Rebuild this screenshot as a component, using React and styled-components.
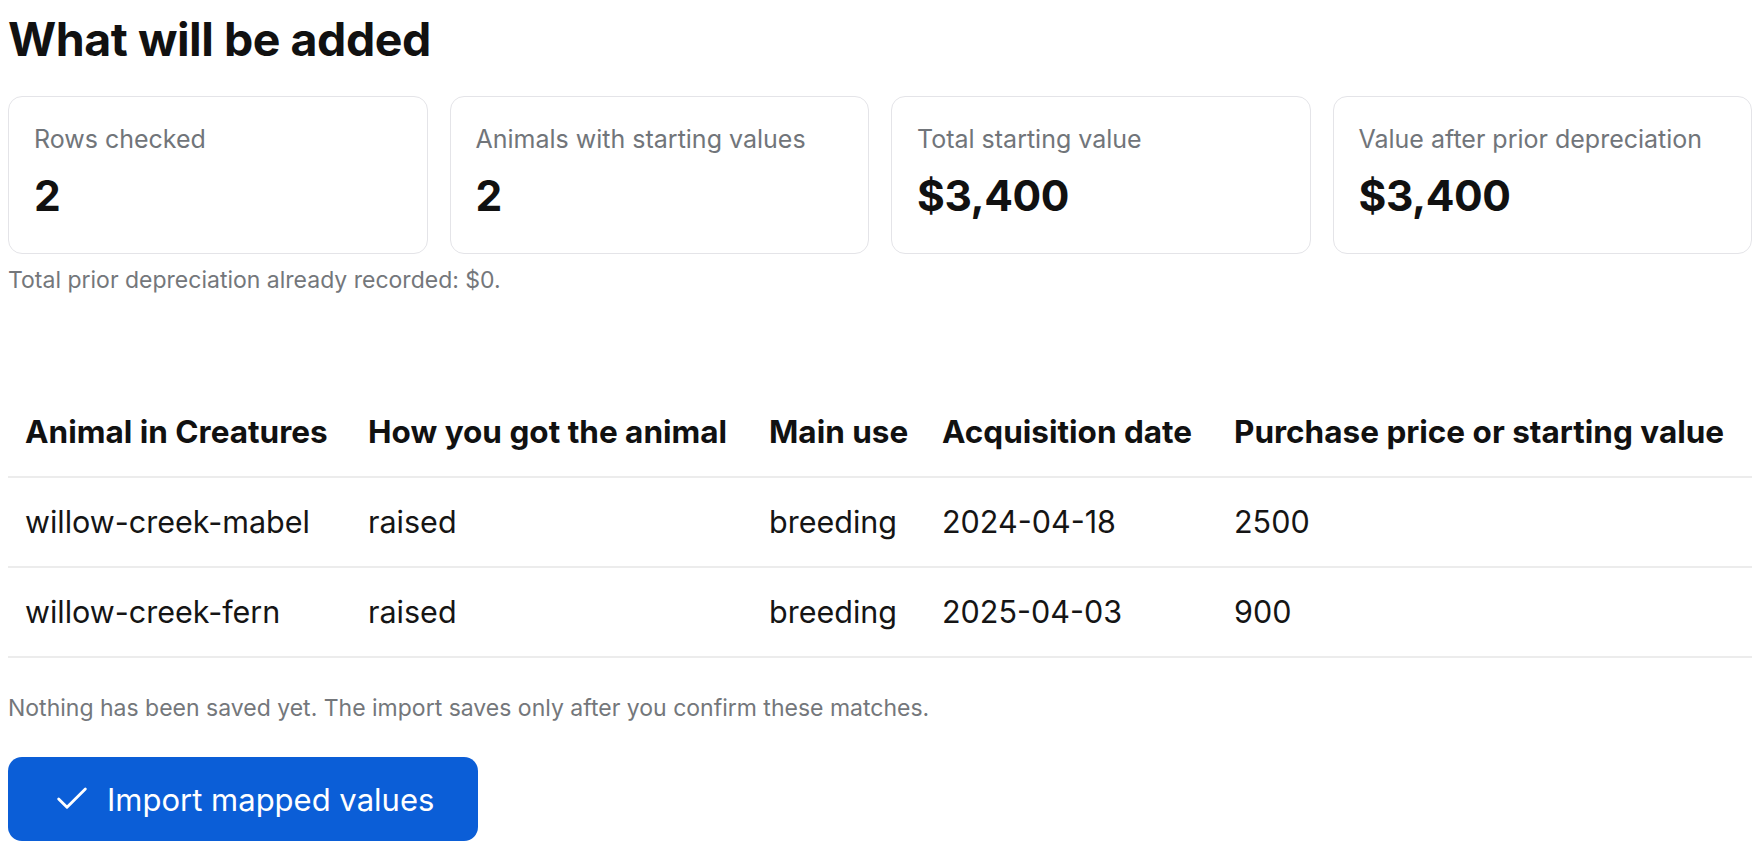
import React from 'react'
import styled, { createGlobalStyle } from 'styled-components'
import { Check } from 'lucide-react'

const GlobalStyle = createGlobalStyle`
    body {
        margin: 8px;
        background: #ffffff;
        font-family: Inter, "Noto Sans", sans-serif;
        color: #111111;
    }
`

const stats = [
    { label: 'Rows checked', value: '2' },
    { label: 'Animals with starting values', value: '2' },
    { label: 'Total starting value', value: '$3,400' },
    { label: 'Value after prior depreciation', value: '$3,400' },
]

const columns = [
    { title: 'Animal in Creatures', width: 343 },
    { title: 'How you got the animal', width: 401 },
    { title: 'Main use', width: 173 },
    { title: 'Acquisition date', width: 292 },
    { title: 'Purchase price or starting value', width: 535 },
]

const rows = [
    ['willow-creek-mabel', 'raised', 'breeding', '2024-04-18', '2500'],
    ['willow-creek-fern', 'raised', 'breeding', '2025-04-03', '900'],
]

const App = () => {
    return (
        <Page>
            <GlobalStyle />
            <Title>What will be added</Title>
            <StatGrid>
                {stats.map((s) => (
                    <StatCard key={s.label}>
                        <StatLabel>{s.label}</StatLabel>
                        <StatValue>{s.value}</StatValue>
                    </StatCard>
                ))}
            </StatGrid>
            <Note>Total prior depreciation already recorded: $0.</Note>

            <Table>
                <colgroup>
                    {columns.map((c) => (
                        <col key={c.title} style={{ width: c.width }} />
                    ))}
                </colgroup>
                <thead>
                    <tr>
                        {columns.map((c) => (
                            <HeadCell key={c.title}>{c.title}</HeadCell>
                        ))}
                    </tr>
                </thead>
                <tbody>
                    {rows.map((r) => (
                        <tr key={r[0]}>
                            {r.map((cell, i) => (
                                <Cell key={i}>{cell}</Cell>
                            ))}
                        </tr>
                    ))}
                </tbody>
            </Table>

            <Note $spaced>Nothing has been saved yet. The import saves only after you confirm these matches.</Note>

            <ImportButton type='button'>
                <Check size={40} strokeWidth={1.7} />
                Import mapped values
            </ImportButton>
        </Page>
    )
}

const Page = styled.div`
    display: flex;
    flex-direction: column;
    align-items: stretch;
`

const Title = styled.h1`
    margin: 4px 0 0;
    font-size: 46.5px;
    line-height: 1.2;
    font-weight: 700;
    letter-spacing: -0.01em;
    color: #111111;
`

const StatGrid = styled.div`
    display: grid;
    grid-template-columns: repeat(4, 1fr);
    gap: 22px;
    margin-top: 28px;
`

const StatCard = styled.div`
    display: flex;
    flex-direction: column;
    gap: 15px;
    padding: 26px 25px 32px;
    border: 1px solid #e4e4e8;
    border-radius: 14px;
    background: #ffffff;
`

const StatLabel = styled.div`
    font-size: 25px;
    line-height: 1.3;
    color: #71757a;
`

const StatValue = styled.div`
    font-size: 42.5px;
    line-height: 1.2;
    font-weight: 700;
    letter-spacing: -0.01em;
    color: #111111;
`

const Note = styled.p`
    margin: ${(p) => (p.$spaced ? '34px 0 0' : '10px 0 0')};
    font-size: 23px;
    line-height: 32px;
    color: #74777b;
`

const Table = styled.table`
    width: 100%;
    table-layout: fixed;
    border-collapse: collapse;
    margin-top: 92px;
`

const HeadCell = styled.th`
    padding: 24px 17px;
    text-align: left;
    font-size: 31.5px;
    line-height: 40px;
    font-weight: 700;
    white-space: nowrap;
    color: #111111;
    border-bottom: 2px solid #ececec;
`

const Cell = styled.td`
    padding: 24px 17px;
    font-size: 30.5px;
    line-height: 40px;
    color: #151515;
    white-space: nowrap;
    border-bottom: 2px solid #ececec;
`

const ImportButton = styled.button`
    align-self: flex-start;
    display: flex;
    align-items: center;
    gap: 15px;
    height: 84px;
    margin-top: 33px;
    padding: 0 44px 0 44px;
    border: none;
    border-radius: 14px;
    background: #0b5ed7;
    color: #ffffff;
    font-family: Inter, "Noto Sans", sans-serif;
    font-size: 31px;
    cursor: pointer;
`

export default App
